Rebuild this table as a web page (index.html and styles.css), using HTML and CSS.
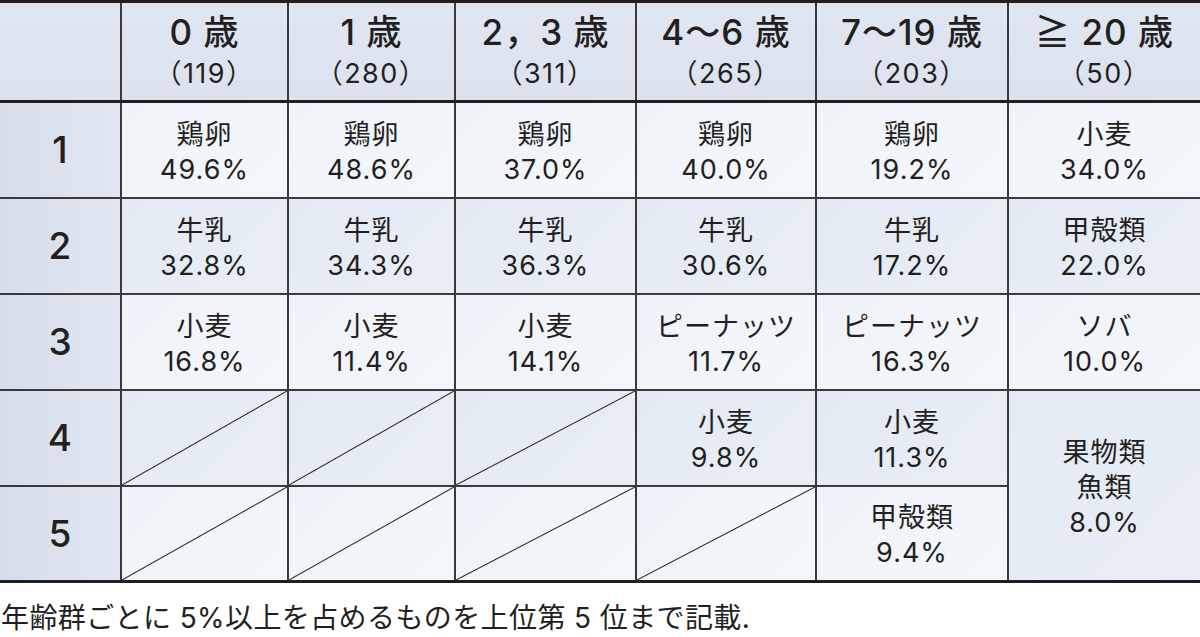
FILE: index.html
```html
<!DOCTYPE html>
<html lang="ja">
<head>
<meta charset="utf-8">
<title>年齢群別 原因食物</title>
<link rel="stylesheet" href="styles.css">
</head>
<body>
<table class="allergy">
  <colgroup>
    <col class="c-rank">
    <col class="c-a">
    <col class="c-a">
    <col class="c-b">
    <col class="c-b2">
    <col class="c-c">
    <col class="c-c">
  </colgroup>
  <thead>
    <tr class="head">
      <th class="corner"></th>
      <th><span class="age">0 歳</span><span class="n">（119）</span></th>
      <th><span class="age">1 歳</span><span class="n">（280）</span></th>
      <th><span class="age">2，3 歳</span><span class="n">（311）</span></th>
      <th><span class="age">4〜6 歳</span><span class="n">（265）</span></th>
      <th><span class="age">7〜19 歳</span><span class="n">（203）</span></th>
      <th><span class="age">≧ 20 歳</span><span class="n">（50）</span></th>
    </tr>
  </thead>
  <tbody>
    <tr class="odd">
      <th class="rank">1</th>
      <td>鶏卵<br>49.6%</td>
      <td>鶏卵<br>48.6%</td>
      <td>鶏卵<br>37.0%</td>
      <td>鶏卵<br>40.0%</td>
      <td>鶏卵<br>19.2%</td>
      <td>小麦<br>34.0%</td>
    </tr>
    <tr class="even">
      <th class="rank">2</th>
      <td>牛乳<br>32.8%</td>
      <td>牛乳<br>34.3%</td>
      <td>牛乳<br>36.3%</td>
      <td>牛乳<br>30.6%</td>
      <td>牛乳<br>17.2%</td>
      <td>甲殻類<br>22.0%</td>
    </tr>
    <tr class="odd">
      <th class="rank">3</th>
      <td>小麦<br>16.8%</td>
      <td>小麦<br>11.4%</td>
      <td>小麦<br>14.1%</td>
      <td>ピーナッツ<br>11.7%</td>
      <td>ピーナッツ<br>16.3%</td>
      <td>ソバ<br>10.0%</td>
    </tr>
    <tr class="even">
      <th class="rank">4</th>
      <td class="empty"></td>
      <td class="empty"></td>
      <td class="empty"></td>
      <td>小麦<br>9.8%</td>
      <td>小麦<br>11.3%</td>
      <td rowspan="2" class="merged">果物類<br>魚類<br>8.0%</td>
    </tr>
    <tr class="odd last">
      <th class="rank">5</th>
      <td class="empty"></td>
      <td class="empty"></td>
      <td class="empty"></td>
      <td class="empty"></td>
      <td>甲殻類<br>9.4%</td>
    </tr>
  </tbody>
</table>
<p class="note">年齢群ごとに 5%以上を占めるものを上位第 5 位まで記載.</p>
</body>
</html>
```

FILE: styles.css
```css
html, body {
  margin: 0;
  padding: 0;
  background: #ffffff;
}

body {
  width: 1200px;
  height: 637px;
  overflow: hidden;
  font-family: Inter, "Noto Sans CJK JP", sans-serif;
  color: #231f20;
}

.allergy {
  width: 1200px;
  border-collapse: collapse;
  table-layout: fixed;
  border-top: 3px solid #231f20;
  border-bottom: 3px solid #231f20;
}

.c-rank { width: 121px; }
.c-a { width: 167px; }
.c-b { width: 181px; }
.c-b2 { width: 180px; }
.c-c { width: 192px; }

.allergy th,
.allergy td {
  border: 2px solid #3a3a3a;
  padding: 0;
  text-align: center;
  vertical-align: middle;
}

.allergy tr > :first-child { border-left: none; }
.allergy tr > :last-child { border-right: none; }

.head {
  height: 100px;
}

.head th {
  background: linear-gradient(180deg, #e0e6f1 0%, #dbe2ee 100%);
  border-bottom: 3px solid #231f20;
  font-weight: 400;
  padding-top: 1px;
}

.age {
  display: block;
  font-size: 35px;
  line-height: 42px;
  font-weight: 500;
  letter-spacing: 1px;
}

.n {
  display: block;
  font-size: 27px;
  line-height: 41px;
  letter-spacing: 1.5px;
}

.allergy tbody tr {
  height: 96px;
}

.allergy td {
  font-size: 27px;
  line-height: 35px;
  font-weight: 400;
  letter-spacing: 1px;
  padding-top: 4px;
}

.allergy td.empty {
  padding-top: 0;
}

.odd td {
  background: linear-gradient(135deg, #eff3f9 0%, #f3f6fa 100%);
}

.even td {
  background: linear-gradient(135deg, #e3eaf4 0%, #e9eef6 100%);
}

.allergy td.merged {
  background: linear-gradient(135deg, #e4ebf5 0%, #e8edf6 100%);
}

.rank {
  font-size: 37px;
  font-weight: 500;
  background: linear-gradient(90deg, #d6deeb 0%, #e0e6f1 100%);
}

.odd td.empty {
  background:
    linear-gradient(to bottom right, transparent calc(50% - 1px), #231f20 50%, transparent calc(50% + 1px)),
    linear-gradient(135deg, #eff3f9 0%, #f3f6fa 100%);
}

.even td.empty {
  background:
    linear-gradient(to bottom right, transparent calc(50% - 1px), #231f20 50%, transparent calc(50% + 1px)),
    linear-gradient(135deg, #e3eaf4 0%, #e9eef6 100%);
}

.note {
  margin: 20px 0 0 1px;
  font-size: 28px;
  line-height: 30px;
  white-space: nowrap;
  letter-spacing: 0.4px;
}
```
